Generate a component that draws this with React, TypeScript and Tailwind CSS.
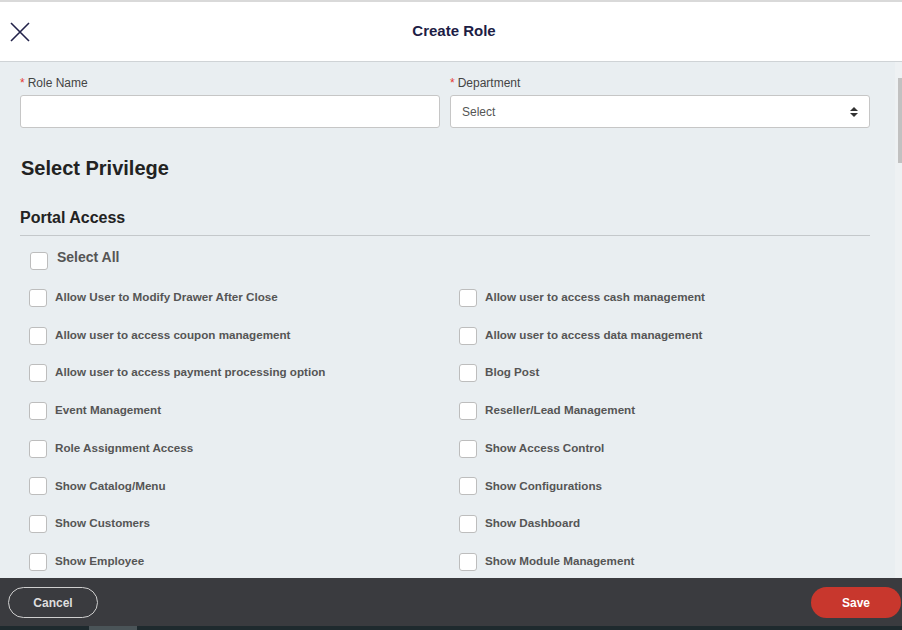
const left = [
  "Allow User to Modify Drawer After Close",
  "Allow user to access coupon management",
  "Allow user to access payment processing option",
  "Event Management",
  "Role Assignment Access",
  "Show Catalog/Menu",
  "Show Customers",
  "Show Employee",
];

const right = [
  "Allow user to access cash management",
  "Allow user to access data management",
  "Blog Post",
  "Reseller/Lead Management",
  "Show Access Control",
  "Show Configurations",
  "Show Dashboard",
  "Show Module Management",
];

function Box() {
  return <span className="h-[18px] w-[18px] shrink-0 rounded-[3px] border border-[#bdbdbd] bg-white" />;
}

function Privilege({ label }: { label: string }) {
  return (
    <label className="flex h-[37.7px] items-center gap-[8px] pl-[9px]">
      <Box />
      <span className="-mt-[2px] text-[11.65px] font-bold text-[#555]">{label}</span>
    </label>
  );
}

function Field({ label, children }: { label: string; children: React.ReactNode }) {
  return (
    <div className="flex-1">
      <div className="text-[12px] leading-[14px] text-[#444]">
        <span className="mr-[3px] text-[#e53935]">*</span>
        {label}
      </div>
      <div className="mt-[5px] flex h-[33px] items-center rounded-[3px] border border-[#c6c6c6] bg-white px-[11px]">
        {children}
      </div>
    </div>
  );
}

export default function App() {
  return (
    <div
      className="flex h-[630px] w-[902px] flex-col overflow-hidden border-t-2 border-[#d9d9d9] bg-[#e9eef1]"
      style={{ fontFamily: '"Liberation Sans", Arial, sans-serif' }}
    >
      <header className="flex h-[60px] shrink-0 items-center border-b border-[#cfd3d6] bg-white">
        <button className="ml-[10px] flex h-[20px] w-[20px] items-center justify-center text-[#22224a]">
          <svg width="20" height="20" viewBox="0 0 20 20" fill="none" stroke="currentColor" strokeWidth="1.6">
            <path d="M1 1 L19 19 M19 1 L1 19" />
          </svg>
        </button>
        <h1 className="flex-1 pr-[24px] text-center text-[15px] font-bold text-[#1d1d45]">Create Role</h1>
      </header>

      <main className="flex min-h-0 flex-1">
        <div className="flex-1 pl-[20px] pr-[25px] pt-[14px]">
          <div className="flex gap-[10px]">
            <Field label="Role Name">
              <span />
            </Field>
            <Field label="Department">
              <span className="flex-1 text-[12px] text-[#555]">Select</span>
              <svg width="8" height="10" viewBox="0 0 8 10" fill="#333">
                <path d="M4 0 L8 4 H0 Z M0 6 H8 L4 10 Z" />
              </svg>
            </Field>
          </div>

          <h2 className="ml-[1px] mt-[28px] text-[20px] font-bold leading-[24px] text-[#222]">Select Privilege</h2>

          <h3 className="mt-[28px] border-b border-[#c4c8cb] pb-[7px] text-[16px] font-bold leading-[20px] text-[#222]">
            Portal Access
          </h3>

          <label className="mt-[15px] flex h-[20px] items-center gap-[9px] pl-[10px]">
            <Box />
            <span className="-mt-[7px] text-[14px] font-bold text-[#555]">Select All</span>
          </label>

          <div className="mt-[8px] grid grid-cols-2 gap-x-[10px]">
            <div>
              {left.map((l) => (
                <Privilege key={l} label={l} />
              ))}
            </div>
            <div>
              {right.map((l) => (
                <Privilege key={l} label={l} />
              ))}
            </div>
          </div>
        </div>
        <div className="w-[7px] bg-[#eef1f3] pl-[3px] pt-[16px]">
          <div className="h-[85px] w-[4px] bg-[#c1c1c1]" />
        </div>
      </main>

      <footer className="flex h-[48px] shrink-0 items-center justify-between bg-[#3a3b3f] pl-[8px] pr-[1px]">
        <button className="h-[31px] w-[90px] rounded-full border border-[#cfcfcf] pt-[1px] text-[12px] font-bold text-[#dedede]">
          Cancel
        </button>
        <button className="h-[31px] w-[90px] rounded-full bg-[#c8372d] pt-[1px] text-[12px] font-bold text-white">
          Save
        </button>
      </footer>
      <div className="flex h-[4px] shrink-0 bg-[#1e2a2e]">
        <div className="ml-[89px] w-[48px] bg-[#4a5458]" />
      </div>
    </div>
  );
}
